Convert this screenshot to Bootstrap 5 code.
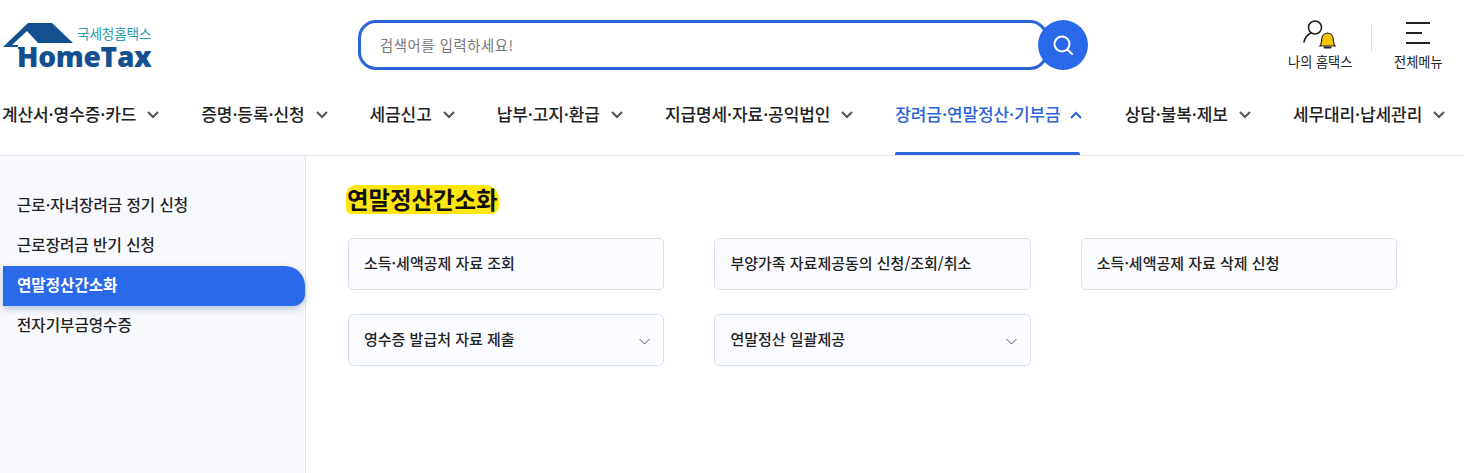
<!DOCTYPE html>
<html lang="ko">
<head>
<meta charset="utf-8">
<title>HomeTax</title>
<link href="https://cdn.jsdelivr.net/npm/bootstrap@5.3.0/dist/css/bootstrap.min.css" rel="stylesheet">
<style>
html,body{height:473px;overflow:hidden;background:#fff}
body{font-family:"Noto Sans CJK KR","Noto Sans",sans-serif;color:#222}
.site-head{height:156px;border-bottom:1px solid #e6e8ec;overflow:hidden}
.top-row{height:88px}
.logo-box{width:152px;height:72px;position:relative;flex:none}
.logo-house{position:absolute;left:0;top:0}
.logo-ko{position:absolute;left:77px;top:25px;font-size:13.7px;line-height:16px;color:#2a9cb0;letter-spacing:-.2px;white-space:nowrap}
.logo-en{position:absolute;left:17px;top:44px;font-family:"Open Sans",sans-serif;font-weight:800;font-size:28px;line-height:24px;color:#14508f;white-space:nowrap;letter-spacing:-.25px}
.search-wrap{margin-left:206px;width:730px;height:50px;position:relative;margin-top:20px;flex:none}
.search-box{width:690px;height:50px;border:3px solid #2b64d8;border-radius:18px;padding-left:19px;font-size:14.3px;letter-spacing:.62px;color:#777;background:#fff}
.search-btn{position:absolute;right:0;top:0;width:50px;height:50px;border-radius:50%;background:#2a69ea;border:0;padding:0}
.util-box{position:absolute;top:19px;text-align:center;font-size:13.2px;line-height:16px;color:#222;white-space:nowrap}
.util-sep{position:absolute;left:1371px;top:25px;width:1px;height:27px;background:#dcdfe3}
.main-nav{height:67px;margin:0;padding:0;white-space:nowrap}
.main-nav .menu-item{height:67px;display:flex;align-items:flex-start;padding-top:13px;font-size:17px;line-height:26px;font-weight:500;color:#222;text-decoration:none;flex:none;position:relative;letter-spacing:-.1px}
.menu-item svg{margin-left:11px;margin-top:10px}
.main-nav .menu-item.on{color:#2b64d8}
.menu-item.on svg{margin-left:9px}
.menu-item.on::after{content:"";position:absolute;left:0;right:2px;bottom:0;height:3px;background:#2b64d8;border-radius:2px 2px 0 0}
.page-body{height:317px}
.side-col{width:306px;flex:none;background:#f8f9fd;border-right:1px solid #dfe6f2;padding:30px 0 0 3px}
.side-link{display:block;height:40px;line-height:36px;padding-left:14px;font-size:15.6px;font-weight:500;color:#222;text-decoration:none;width:302px}
.side-link.on{background:#2a69ea;color:#fff;font-weight:700;border-radius:0 20px 12px 0;box-shadow:0 3px 7px rgba(40,70,130,.3)}
.content-col{padding:29px 0 0 42px}
.title-mark{display:inline-block;font-size:23.4px;font-weight:700;color:#111;background:#ffe60f;border-radius:10px 14px 8px 5px;height:29px;line-height:29px;margin:0 0 24px -2px;padding:0 1px 0 1px}
.sub-grid{display:grid;grid-template-columns:repeat(3,316.4px);column-gap:50px;row-gap:24px}
.sub-card{height:52px;border:1px solid #d6dff0;border-radius:5px;background:#fbfcff;padding:0 13px 2px 15px;font-size:15px;font-weight:500;color:#222;text-decoration:none}
.sub-card svg{margin-top:5px}
</style>
</head>
<body>
<header class="site-head">
  <div class="top-row d-flex position-relative">
    <a href="#" class="logo-box text-decoration-none">
      <svg class="logo-house" width="80" height="72" viewBox="0 0 80 72"><path d="M3 47 L28 23 L52 23 L73 43 L38 43 L27 31 L12 45 L18 45 L18 49 L21 49 L21 47 L3 47 Z" fill="#14508f"/></svg>
      <span class="logo-ko">국세청홈택스</span>
      <span class="logo-en">HomeTax</span>
    </a>
    <div class="search-wrap">
      <div class="search-box d-flex align-items-center">검색어를 입력하세요!</div>
      <button class="search-btn d-flex align-items-center justify-content-center" type="button" aria-label="검색">
        <svg width="24" height="24" viewBox="0 0 24 24" fill="none" stroke="#fff" stroke-width="2"><circle cx="11" cy="11" r="7.5"/><path d="M16.5 16.5 L21 21" stroke-linecap="round"/></svg>
      </button>
    </div>
    <a href="#" class="util-box text-decoration-none" style="left:1288px">
      <svg class="d-block mx-auto" width="34" height="32" viewBox="0 0 34 32" fill="none"><circle cx="12" cy="8.5" r="6.5" stroke="#222" stroke-width="1.6"/><path d="M1 23 C2 18 4.5 15.5 8 14" stroke="#222" stroke-width="1.6" stroke-linecap="round"/><path d="M17 27 C18.8 25 18.4 22 18.8 19.5 C19.2 16.5 21.5 14 24.5 14 C27.5 14 29.8 16.5 30.2 19.5 C30.6 22 30.2 25 32 27 Z" fill="#f6c400" stroke="#222" stroke-width="1.2"/><path d="M21.5 28.5 H27.5" stroke="#222" stroke-width="1.8" stroke-linecap="round"/></svg>
      <span class="d-block" style="margin-top:3px">나의 홈택스</span>
    </a>
    <span class="util-sep"></span>
    <a href="#" class="util-box text-decoration-none" style="left:1394px">
      <svg class="d-block mx-auto" width="26" height="32" viewBox="0 0 26 32" fill="none" stroke="#222" stroke-width="2"><path d="M1 4 H25 M1 14 H17 M1 24 H25"/></svg>
      <span class="d-block" style="margin-top:3px">전체메뉴</span>
    </a>
  </div>
  <nav class="main-nav d-flex">
    <a href="#" class="menu-item" style="margin-left:2px">계산서·영수증·카드<svg width="12" height="8" viewBox="0 0 12 8" fill="none" stroke="#555" stroke-width="2"><path d="M1 1 L6 6 L11 1"/></svg></a>
    <a href="#" class="menu-item" style="margin-left:42px">증명·등록·신청<svg width="12" height="8" viewBox="0 0 12 8" fill="none" stroke="#555" stroke-width="2"><path d="M1 1 L6 6 L11 1"/></svg></a>
    <a href="#" class="menu-item" style="margin-left:42px">세금신고<svg width="12" height="8" viewBox="0 0 12 8" fill="none" stroke="#555" stroke-width="2"><path d="M1 1 L6 6 L11 1"/></svg></a>
    <a href="#" class="menu-item" style="margin-left:42px">납부·고지·환급<svg width="12" height="8" viewBox="0 0 12 8" fill="none" stroke="#555" stroke-width="2"><path d="M1 1 L6 6 L11 1"/></svg></a>
    <a href="#" class="menu-item" style="margin-left:42px">지급명세·자료·공익법인<svg width="12" height="8" viewBox="0 0 12 8" fill="none" stroke="#555" stroke-width="2"><path d="M1 1 L6 6 L11 1"/></svg></a>
    <a href="#" class="menu-item on" style="margin-left:42px">장려금·연말정산·기부금<svg width="12" height="8" viewBox="0 0 12 8" fill="none" stroke="#2b64d8" stroke-width="2"><path d="M1 7 L6 2 L11 7"/></svg></a>
    <a href="#" class="menu-item" style="margin-left:43px">상담·불복·제보<svg width="12" height="8" viewBox="0 0 12 8" fill="none" stroke="#555" stroke-width="2"><path d="M1 1 L6 6 L11 1"/></svg></a>
    <a href="#" class="menu-item" style="margin-left:42px">세무대리·납세관리<svg width="12" height="8" viewBox="0 0 12 8" fill="none" stroke="#555" stroke-width="2"><path d="M1 1 L6 6 L11 1"/></svg></a>
  </nav>
</header>
<div class="page-body d-flex">
  <aside class="side-col">
    <a href="#" class="side-link">근로·자녀장려금 정기 신청</a>
    <a href="#" class="side-link">근로장려금 반기 신청</a>
    <a href="#" class="side-link on">연말정산간소화</a>
    <a href="#" class="side-link">전자기부금영수증</a>
  </aside>
  <main class="content-col flex-grow-1">
    <h2 class="title-mark">연말정산간소화</h2>
    <div class="sub-grid">
      <a href="#" class="sub-card d-flex align-items-center">소득·세액공제 자료 조회</a>
      <a href="#" class="sub-card d-flex align-items-center">부양가족 자료제공동의 신청/조회/취소</a>
      <a href="#" class="sub-card d-flex align-items-center">소득·세액공제 자료 삭제 신청</a>
      <a href="#" class="sub-card d-flex align-items-center justify-content-between">영수증 발급처 자료 제출<svg width="11" height="7" viewBox="0 0 11 7" fill="none" stroke="#555" stroke-width="1"><path d="M.5 1 L5.5 6 L10.5 1"/></svg></a>
      <a href="#" class="sub-card d-flex align-items-center justify-content-between">연말정산 일괄제공<svg width="11" height="7" viewBox="0 0 11 7" fill="none" stroke="#555" stroke-width="1"><path d="M.5 1 L5.5 6 L10.5 1"/></svg></a>
    </div>
  </main>
</div>
<script src="https://cdn.jsdelivr.net/npm/bootstrap@5.3.0/dist/js/bootstrap.bundle.min.js"></script>
</body>
</html>
